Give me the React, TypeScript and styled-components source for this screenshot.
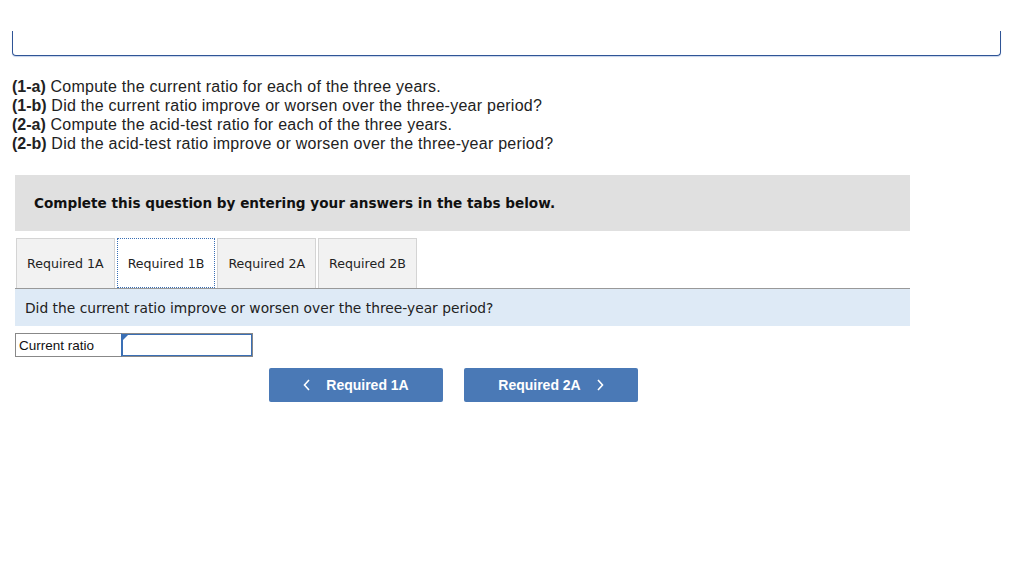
import React from "react";
import styled, { createGlobalStyle } from "styled-components";

const Global = createGlobalStyle`
  html, body { margin: 0; padding: 0; background: #fff; }
  body { font-family: "Liberation Sans", Arial, sans-serif; }
`;

const Page = styled.div`
  width: 1024px;
  height: 579px;
  overflow: hidden;
`;

const TopBox = styled.div`
  margin: 31px 23px 0 12px;
  height: 24px;
  border: 1px solid #2f5496;
  border-top: none;
  border-radius: 0 0 4px 4px;
  box-shadow: 0 1px 1px #c6d3ea;
`;

const Intro = styled.div`
  margin: 21px 0 0 12px;
  font-family: "Liberation Sans", Arial, sans-serif;
  font-size: 16px;
  letter-spacing: 0.25px;
  line-height: 19px;
  color: #222;
`;

const Line = styled.div``;

const Tag = styled.b`
  font-weight: 700;
  letter-spacing: 0;
`;

const Section = styled.div`
  margin: 22px 0 0 15px;
  width: 895px;
`;

const Header = styled.div`
  background: #e0e0e0;
  height: 56px;
  display: flex;
  align-items: center;
  padding-left: 19px;
  font-family: "DejaVu Sans", Verdana, sans-serif;
  font-weight: 700;
  font-size: 13.6px;
  color: #111;
`;

const Tabs = styled.div`
  display: flex;
  margin-top: 7px;
  gap: 2px;
  padding-left: 1px;
`;

const Tab = styled.div<{ $active?: boolean }>`
  height: 50px;
  box-sizing: border-box;
  padding: 0 10px;
  display: flex;
  align-items: center;
  font-family: "DejaVu Sans", Verdana, sans-serif;
  font-size: 12.6px;
  color: #222;
  background: ${(p) => (p.$active ? "#fff" : "#f2f2f2")};
  border: ${(p) => (p.$active ? "1px dotted #3a6fb5" : "1px solid #d4d4d4")};
  border-bottom: ${(p) => (p.$active ? "1px dotted #3a6fb5" : "none")};
  margin-bottom: ${(p) => (p.$active ? "-1px" : "0")};
  position: relative;
  z-index: ${(p) => (p.$active ? 1 : 0)};
`;

const Question = styled.div`
  background: #deeaf6;
  border-top: 1px solid #999;
  height: 37px;
  display: flex;
  align-items: center;
  padding-left: 10px;
  font-family: "DejaVu Sans", Verdana, sans-serif;
  font-size: 13.8px;
  color: #222;
`;

const AnswerRow = styled.div`
  display: flex;
  margin-top: 7px;
  height: 24px;
`;

const Label = styled.div`
  width: 106px;
  box-sizing: border-box;
  border: 1px solid #888;
  border-right: none;
  display: flex;
  align-items: center;
  padding-left: 3px;
  font-family: "Liberation Sans", Arial, sans-serif;
  font-size: 13.5px;
  color: #111;
`;

const InputWrap = styled.div`
  position: relative;
  width: 132px;
  box-sizing: border-box;
  border: 1px solid #888;
  border-left: 1px solid #3a6fb5;
  outline: 1px solid #3a6fb5;
  outline-offset: -2px;
`;

const Corner = styled.div`
  position: absolute;
  top: 1px;
  left: 1px;
  width: 0;
  height: 0;
  border-top: 5px solid #3a6fb5;
  border-right: 5px solid transparent;
`;

const Nav = styled.div`
  display: flex;
  gap: 21px;
  margin: 11px 0 0 254px;
`;

const NavButton = styled.button`
  width: 174px;
  height: 34px;
  border: none;
  border-radius: 2px;
  background: #4a79b6;
  color: #fff;
  font-family: "Liberation Sans", Arial, sans-serif;
  font-weight: 700;
  font-size: 14px;
  display: flex;
  align-items: center;
  justify-content: center;
  gap: 15px;
  padding: 0;
`;

const Chevron = ({ dir }: { dir: "left" | "right" }) => (
  <svg width="8" height="12" viewBox="0 0 8 12">
    <path
      d={dir === "left" ? "M6 1 L1.5 6 L6 11" : "M2 1 L6.5 6 L2 11"}
      fill="none"
      stroke="#fff"
      strokeWidth="1.6"
    />
  </svg>
);

export default function App() {
  return (
    <Page>
      <Global />
      <TopBox />
      <Intro>
        <Line><Tag>(1-a)</Tag> Compute the current ratio for each of the three years.</Line>
        <Line><Tag>(1-b)</Tag> Did the current ratio improve or worsen over the three-year period?</Line>
        <Line><Tag>(2-a)</Tag> Compute the acid-test ratio for each of the three years.</Line>
        <Line><Tag>(2-b)</Tag> Did the acid-test ratio improve or worsen over the three-year period?</Line>
      </Intro>
      <Section>
        <Header>Complete this question by entering your answers in the tabs below.</Header>
        <Tabs>
          <Tab>Required 1A</Tab>
          <Tab $active>Required 1B</Tab>
          <Tab>Required 2A</Tab>
          <Tab>Required 2B</Tab>
        </Tabs>
        <Question>Did the current ratio improve or worsen over the three-year period?</Question>
        <AnswerRow>
          <Label>Current ratio</Label>
          <InputWrap>
            <Corner />
          </InputWrap>
        </AnswerRow>
        <Nav>
          <NavButton>
            <Chevron dir="left" />
            Required 1A
          </NavButton>
          <NavButton>
            Required 2A
            <Chevron dir="right" />
          </NavButton>
        </Nav>
      </Section>
    </Page>
  );
}
